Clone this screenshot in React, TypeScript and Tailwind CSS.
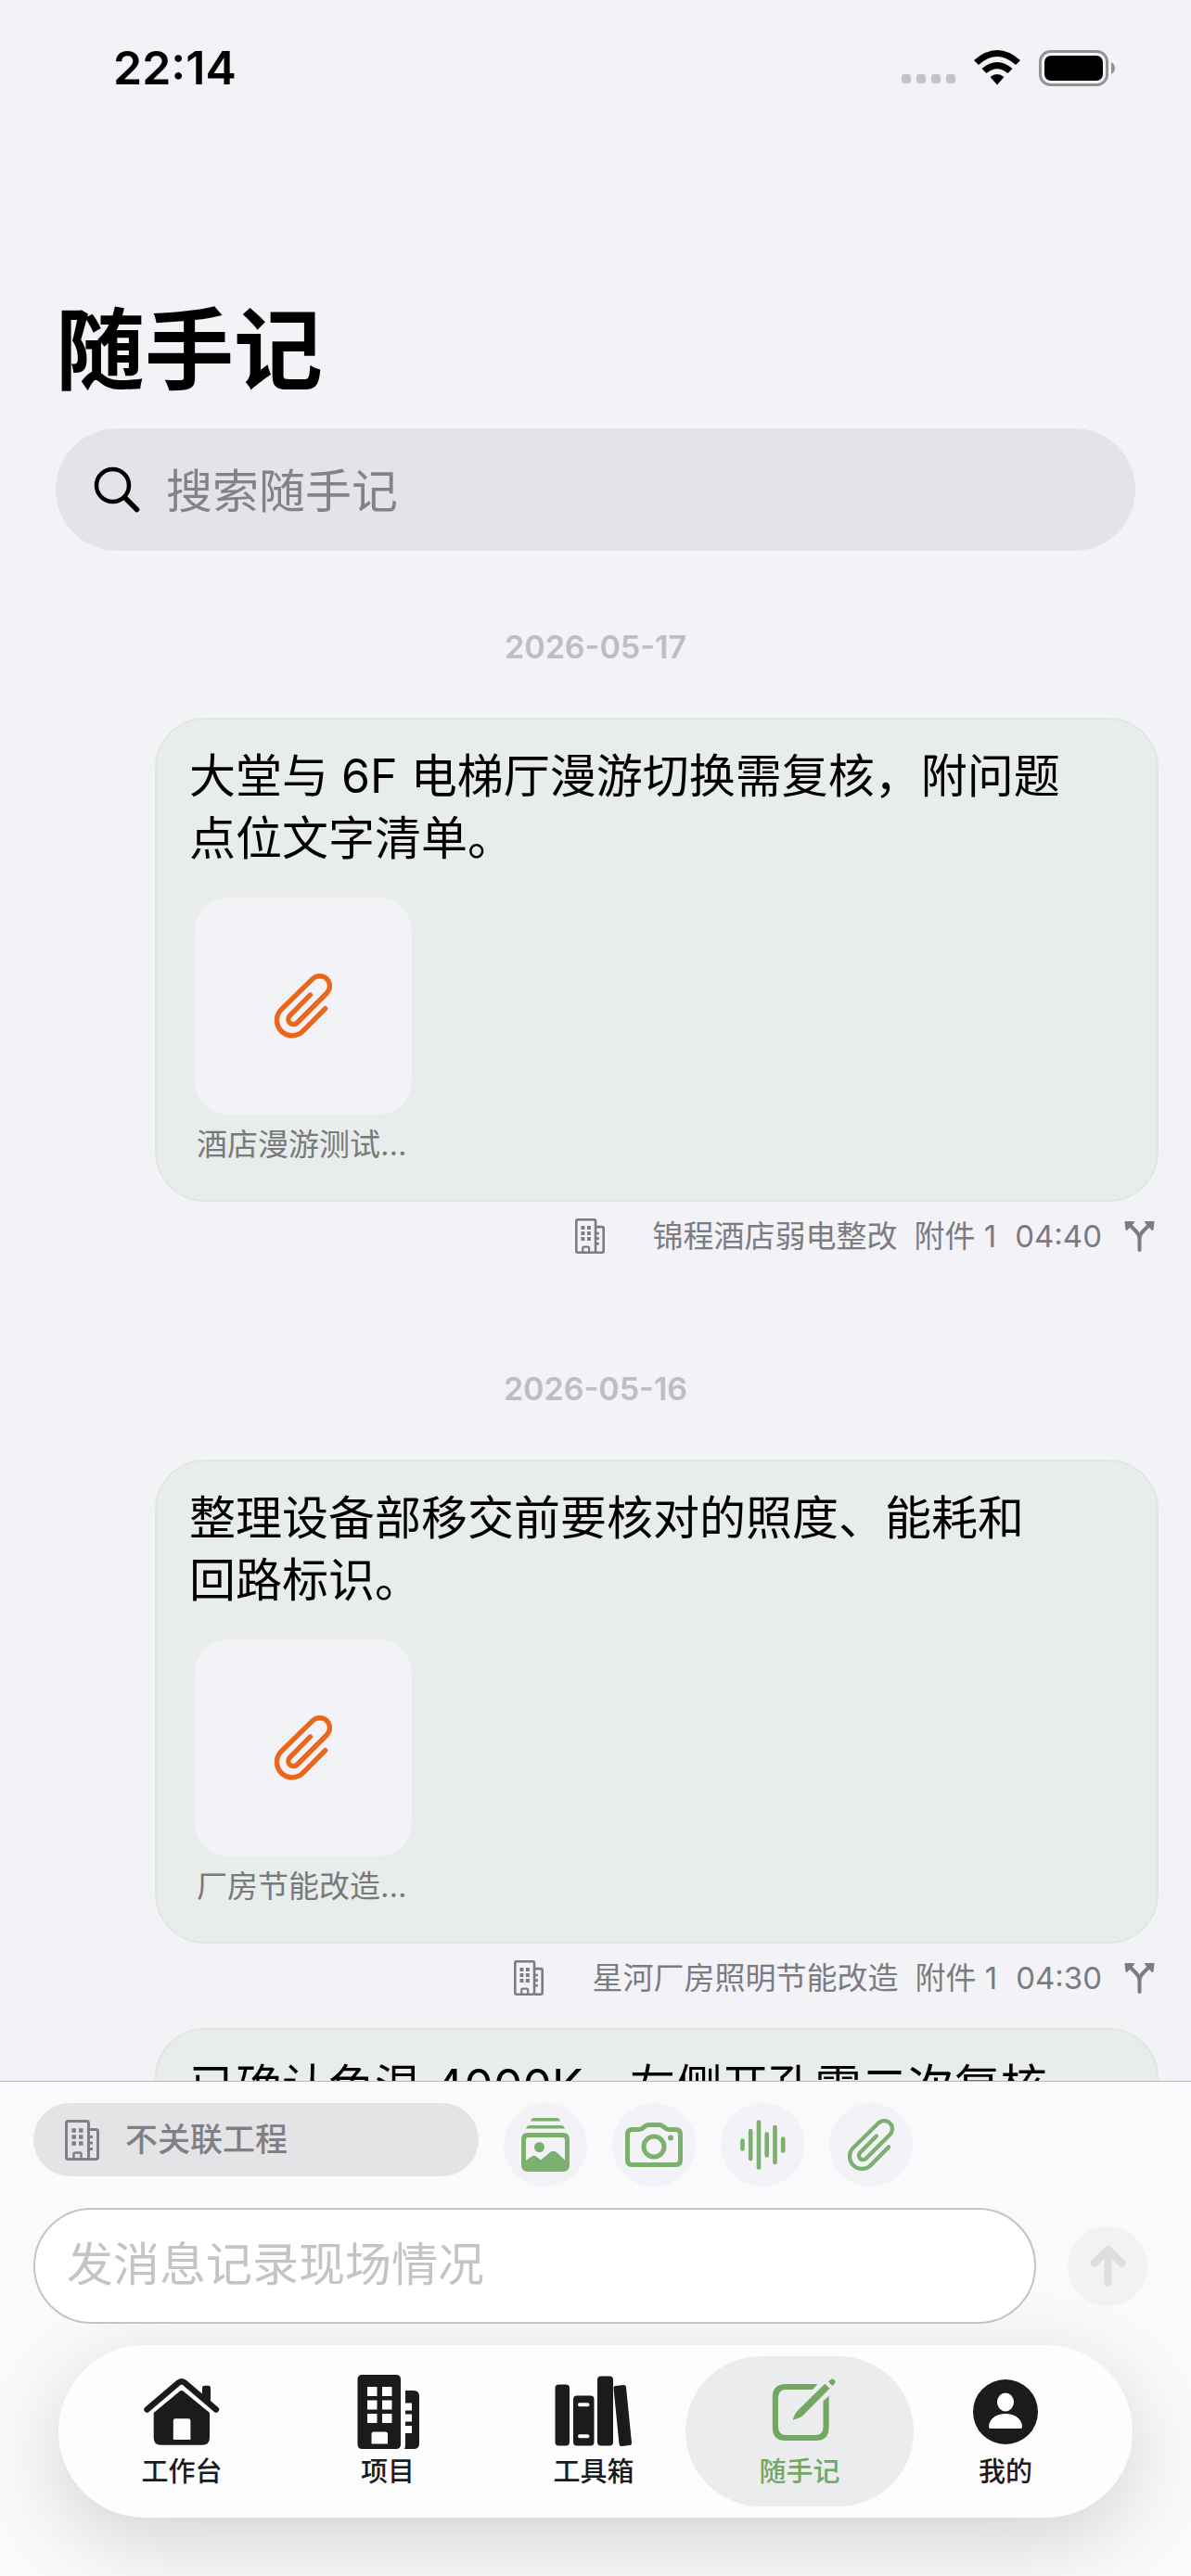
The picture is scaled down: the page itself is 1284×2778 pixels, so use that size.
import { useState } from 'react';
import clsx from 'clsx';

type IconProps = { className?: string };

type Note = {
  text: string;
  file?: string;
  project?: string;
  time?: string;
};

const noteGroups: { date: string; notes: Note[] }[] = [
  {
    date: '2026-05-17',
    notes: [
      {
        text: '大堂与 6F 电梯厅漫游切换需复核，附问题点位文字清单。',
        file: '酒店漫游测试记录',
        project: '锦程酒店弱电整改',
        time: '04:40',
      },
    ],
  },
  {
    date: '2026-05-16',
    notes: [
      {
        text: '整理设备部移交前要核对的照度、能耗和回路标识。',
        file: '厂房节能改造清单',
        project: '星河厂房照明节能改造',
        time: '04:30',
      },
      {
        text: '已确认色温 4000K，左侧开孔需二次复核',
      },
    ],
  },
];

const PaperclipIcon = ({ className }: IconProps) => (
  <svg viewBox="288 302 186 208" fill="none" stroke="currentColor" strokeWidth="16" strokeLinecap="round" className={className}>
    <path d="M452 415 380 488A49 49 0 0 1 310 418L411 319A32 32 0 0 1 457 365L361 461A16 16 0 0 1 337 438L403 371" />
  </svg>
);

const BuildingIcon = ({ className }: IconProps) => (
  <svg viewBox="0 0 37 44" fill="none" stroke="currentColor" strokeWidth="3" strokeLinejoin="round" className={className}>
    <rect x="1.5" y="1.5" width="24" height="41" rx="2" />
    <path d="M25.5 10.5H33.5Q35.5 10.5 35.5 12.5V40.5Q35.5 42.5 33.5 42.5H25.5" />
    <path d="M9.5 42V37Q9.5 35.5 11 35.5H16Q17.5 35.5 17.5 37V42" strokeWidth="2.5" />
    <path d="M7.5 11.5H12M15 11.5H19.5M7.5 18.5H12M15 18.5H19.5M7.5 25.5H12M15 25.5H19.5" strokeWidth="4.5" />
    <path d="M26 18.5H30M26 25H30M26 31.5H30" strokeWidth="3" />
  </svg>
);

const ForkIcon = ({ className }: IconProps) => (
  <svg viewBox="0 0 33 34" fill="none" stroke="currentColor" strokeWidth="4" strokeLinecap="round" className={className}>
    <path d="M16.5 32V20C16.5 16.5 15 14 12 11L6 5M16.5 20C16.5 16.5 18 14 21 11L27 5" />
    <path d="M1.5 2H10L2.5 10ZM31.5 2H23L30.5 10Z" fill="currentColor" strokeWidth="2" strokeLinejoin="round" />
  </svg>
);

const SearchIcon = ({ className }: IconProps) => (
  <svg viewBox="0 0 50 50" fill="none" stroke="currentColor" strokeWidth="4.5" strokeLinecap="round" className={className}>
    <circle cx="20.5" cy="20.5" r="17.5" />
    <path d="M33.5 33.5 46.5 46.5" strokeWidth="5.5" />
  </svg>
);

const AlbumIcon = ({ className }: IconProps) => (
  <svg viewBox="0 0 54 60" fill="currentColor" className={className}>
    <path d="M11 4.5Q12 1 15 1H39Q42 1 43 4.5ZM6 12.5Q7 9 10 9H44Q47 9 48 12.5Z" />
    <path fillRule="evenodd" d="M8 17H46Q53 17 53 24V51Q53 59 46 59H8Q1 59 1 51V24Q1 17 8 17ZM9 22Q6 22 6 25V47L12 42.5Q14.5 41 17 42.5L22 46.5L32 38Q35.5 35.5 39 38L48 46.5V25Q48 22 45 22Z" />
    <circle cx="20.5" cy="32.5" r="5.5" />
  </svg>
);

const CameraIcon = ({ className }: IconProps) => (
  <svg viewBox="0 0 62 50" fill="none" stroke="currentColor" strokeWidth="5" className={className}>
    <path d="M7.5 8.5H15C20 8.5 20.5 3.5 25 3.5H37C41.5 3.5 42 8.5 47 8.5H54.5Q59.5 8.5 59.5 13.5V41.5Q59.5 46.5 54.5 46.5H7.5Q2.5 46.5 2.5 41.5V13.5Q2.5 8.5 7.5 8.5Z" />
    <circle cx="31" cy="27" r="11" />
    <circle cx="49" cy="17.5" r="3" fill="currentColor" stroke="none" />
  </svg>
);

const VoiceIcon = ({ className }: IconProps) => (
  <svg viewBox="0 0 50 56" fill="none" stroke="currentColor" strokeWidth="4.6" strokeLinecap="round" className={className}>
    <path d="M3.5 23.5V32.5M12.2 13V43M21 3.5V52.5M29.7 16.5V39.5M38.5 9V47M47.2 21.5V34.5" />
  </svg>
);

const SendIcon = ({ className }: IconProps) => (
  <svg viewBox="0 0 40 46" fill="none" stroke="currentColor" strokeWidth="8.5" strokeLinecap="round" strokeLinejoin="round" className={className}>
    <path d="M20 41.5V5M5 20 20 5 35 20" />
  </svg>
);

const HomeIcon = ({ className }: IconProps) => (
  <svg viewBox="0 0 84 80" fill="currentColor" className={className}>
    <path d="M4.5 37.5 38.5 8.5Q41.8 6 45 8.5L79 37.5" fill="none" stroke="currentColor" strokeWidth="6.4" strokeLinecap="round" />
    <path d="M64 24V14Q64 11.7 66.5 11.7H70.5Q73 11.7 73 14V32Z" />
    <path fillRule="evenodd" d="M11.7 41 39.5 18Q41.8 16 44 18L72 41V68Q72 75.7 64 75.7H19.5Q11.7 75.7 11.7 68ZM32.8 49.5V70H51.4V49.5Q51.4 47.3 49 47.3H35Q32.8 47.3 32.8 49.5Z" />
  </svg>
);

const ProjectIcon = ({ className }: IconProps) => (
  <svg viewBox="0 0 84 80" fill="currentColor" className={className}>
    <path fillRule="evenodd" d="M14.5 0H51Q56 0 56 5V75Q56 80 51 80H14.5Q9.5 80 9.5 75V5Q9.5 0 14.5 0ZM20 13V23H30.5V13ZM36 13V23H46.5V13ZM20 27.5V37.5H30.5V27.5ZM36 27.5V37.5H46.5V27.5ZM20 42V52H30.5V42ZM36 42V52H46.5V42ZM27 61.5Q24.5 61.5 24.5 64V74.5H42V64Q42 61.5 39.5 61.5Z" />
    <path d="M61 17H70Q76 17 76 23V74Q76 80 70 80H60Q61 78 61 75V63H68V55H61V50.5H68V42.5H61V38.5H68V30.5H61Z" />
  </svg>
);

const ToolboxIcon = ({ className }: IconProps) => (
  <svg viewBox="0 0 84 80" fill="currentColor" className={className}>
    <rect x="0.5" y="10.5" width="15.5" height="66" rx="4" />
    <path fillRule="evenodd" d="M24 22.5H38.5Q42.5 22.5 42.5 26.5V72.5Q42.5 76.5 38.5 76.5H24Q20 76.5 20 72.5V26.5Q20 22.5 24 22.5ZM27 30.3A2 2 0 0 0 27 34.3H35.5A2 2 0 0 0 35.5 30.3ZM27 64.3A2 2 0 0 0 27 68.3H35.5A2 2 0 0 0 35.5 64.3Z" />
    <rect x="46" y="1.5" width="17" height="75" rx="4" />
    <path d="M66 14.5 74.5 13.5 80.5 73.5 72 74.5Z" stroke="currentColor" strokeWidth="5" strokeLinejoin="round" />
  </svg>
);

const ComposeIcon = ({ className }: IconProps) => (
  <svg viewBox="0 0 84 80" fill="currentColor" className={className}>
    <path d="M61.7 10H27Q12.8 10 12.8 24V57Q12.8 71 27 71H59.5Q73.6 71 73.6 57V22.7L67.5 28.5V56Q67.5 65 59 65H27.5Q19 65 19 56V25Q19 16 27.5 16H56Z" />
    <path d="M69.3 9.7 74.5 14.7 44.5 45Q40 47.5 35.5 48.5Q34.5 48.5 35 47.5Q36.5 43 39 39.5Z" />
    <path d="M73 7.5 76 4.8A3.3 3.3 0 0 1 80.3 9L77.5 12Z" />
  </svg>
);

const ProfileIcon = ({ className }: IconProps) => (
  <svg viewBox="-2 0 84 80" className={className}>
    <circle cx="40" cy="40" r="35" fill="currentColor" />
    <ellipse cx="40" cy="29.5" rx="9" ry="10" fill="white" />
    <path d="M24 58Q22 58 22 56C22 48 30 42 40 42S58 48 58 56Q58 58 56 58Z" fill="white" />
  </svg>
);

const tabs = [
  { label: '工作台', Icon: HomeIcon },
  { label: '项目', Icon: ProjectIcon },
  { label: '工具箱', Icon: ToolboxIcon },
  { label: '随手记', Icon: ComposeIcon },
  { label: '我的', Icon: ProfileIcon },
];

const actions = [
  { label: '相册', Icon: AlbumIcon, size: 'w-[54px]' },
  { label: '拍照', Icon: CameraIcon, size: 'w-[62px]' },
  { label: '语音', Icon: VoiceIcon, size: 'w-[50px]' },
  { label: '附件', Icon: PaperclipIcon, size: 'w-[50px]' },
];

const StatusBar = () => (
  <div className="flex items-center justify-between pt-[43px] pr-[82px] pl-[122px]">
    <span className="text-[50px] leading-[60px] font-semibold">22:14</span>
    <div className="flex items-center">
      <svg viewBox="0 0 58 40" className="h-10 w-[58px]" fill="#c4c3c9">
        <rect x="0" y="27" width="10" height="10" rx="3" />
        <rect x="16" y="27" width="10" height="10" rx="3" />
        <rect x="32" y="27" width="10" height="10" rx="3" />
        <rect x="48" y="27" width="10" height="10" rx="3" />
      </svg>
      <svg viewBox="0 0 50 38" className="ml-5 h-[38px] w-[50px]">
        <path d="M0 11Q25-11 50 11L45 16Q25-2 5 16Z" />
        <path d="M8.5 20Q25 6 41.5 20L36.5 25Q25 15.5 13.5 25Z" />
        <path d="M17.5 29Q25 23 32.5 29L25 37.5Z" />
      </svg>
      <svg viewBox="0 0 82 39" className="ml-5 h-[39px] w-[82px]">
        <rect x="1.5" y="1.5" width="72" height="36" rx="11" fill="none" stroke="#929196" strokeWidth="3" />
        <rect x="6" y="6" width="63" height="27" rx="7" />
        <path d="M78 13Q82 15.5 82 19.5T78 26Z" fill="#929196" />
      </svg>
    </div>
  </div>
);

const NoteCard = ({ note }: { note: Note }) => (
  <article className="pb-7">
    <div className="rounded-[54px] border-2 border-[#dde8df] bg-[#e8eceb] px-[35px] pt-7 pb-9">
      <p className="pr-15 text-[50px] leading-[67px]">{note.text}</p>
      {note.file && (
        <a href="#attachment" className="mt-[30px] ml-[6px] block w-[234px]">
          <span className="flex h-[234px] items-center justify-center rounded-[36px] bg-[#f2f2f7] text-[#e8671b]">
            <PaperclipIcon className="w-[62px]" />
          </span>
          <span className="mt-2 block truncate px-[2px] text-[33px] leading-[48px] text-[#77797a]">
            {note.file}
          </span>
        </a>
      )}
    </div>
    {note.project && (
      <div className="mt-[11px] flex h-[52px] items-center justify-end pr-1 text-[33px] leading-[48px] text-[#7c7b80]">
        <BuildingIcon className="mr-[52px] w-8" />
        <span>{note.project}</span>
        <span className="ml-[18px]">附件 1</span>
        <span className="ml-5">{note.time}</span>
        <button type="button" aria-label="流转" className="ml-6">
          <ForkIcon className="w-[33px]" />
        </button>
      </div>
    )}
  </article>
);

const App = () => {
  const [activeTab, setActiveTab] = useState('随手记');
  const [draft, setDraft] = useState('');

  return (
    <div className="flex h-screen flex-col overflow-hidden bg-[#f2f2f7] font-[Inter,'Noto_Sans_CJK_SC',sans-serif] text-black">
      <StatusBar />

      <header className="px-[60px] pt-[204px]">
        <h1 className="text-[96px] leading-[140px] font-bold">随手记</h1>
        <label className="mt-[15px] flex h-[132px] items-center gap-7 rounded-full bg-[#e3e3e8] px-[41px]">
          <SearchIcon className="w-[50px]" />
          <input
            type="search"
            aria-label="搜索随手记"
            placeholder="搜索随手记"
            className="min-w-0 flex-1 bg-transparent pt-1 text-[50px] outline-none placeholder:text-[#838288]"
          />
        </label>
      </header>

      <main className="min-h-0 flex-1 overflow-hidden pr-[35px] pl-[167px]">
        {noteGroups.map((group) => (
          <section key={group.date} className="pb-[7px]">
            <h2 className="-ml-[132px] pt-20 pb-[52px] text-center text-[34px] leading-12 font-semibold text-[#bdbdc2]">
              {group.date}
            </h2>
            {group.notes.map((note) => (
              <NoteCard key={note.text} note={note} />
            ))}
          </section>
        ))}
      </main>

      <footer className="border-t border-[#bcbcc0] bg-[#fafafc] px-9 pt-[23px] pb-[63px]">
        <div className="flex items-start">
          <button
            type="button"
            className="mr-[27px] flex h-[79px] w-[480px] items-center gap-7 rounded-full bg-[#e4e4e7] pl-[34px] text-[35px] font-medium text-[#807f86]"
          >
            <BuildingIcon className="w-[37px]" />
            不关联工程
          </button>
          <div className="flex gap-[27px]">
            {actions.map(({ label, Icon, size }) => (
              <button
                key={label}
                type="button"
                aria-label={label}
                className="flex size-[90px] items-center justify-center rounded-full bg-[#f2f2f7] text-[#7bb06e]"
              >
                <Icon className={size} />
              </button>
            ))}
          </div>
        </div>

        <div className="mt-[23px] flex items-center gap-[34px] pr-[11px]">
          <input
            type="text"
            aria-label="发消息记录现场情况"
            placeholder="发消息记录现场情况"
            value={draft}
            onChange={(e) => setDraft(e.target.value)}
            className="h-[125px] min-w-0 flex-1 rounded-full border-2 border-[#c4c4c7] bg-white px-[34px] pb-1 text-[50px] outline-none placeholder:text-[#c4c4c6]"
          />
          <button
            type="button"
            aria-label="发送"
            className="flex size-[86px] items-center justify-center rounded-full bg-[#f2f2f4] text-[#dedee0]"
          >
            <SendIcon className="w-[39px]" />
          </button>
        </div>

        <nav className="mx-[27px] mt-[23px] flex h-[186px] items-center rounded-full bg-[#fdfdfe] pr-[26px] pl-[22px] shadow-[0_24px_90px_rgba(0,0,0,0.16)]">
          {tabs.map(({ label, Icon }) => (
            <button
              key={label}
              type="button"
              onClick={() => setActiveTab(label)}
              className={clsx(
                '-mx-3 flex h-[162px] flex-1 flex-col items-center rounded-full pt-5 text-[29px] leading-10 font-medium',
                activeTab === label ? 'bg-[#ebecee] text-[#72a862]' : 'text-[#1a1b1d]'
              )}
            >
              <Icon className="mb-[5px] h-20 w-[84px]" />
              {label}
            </button>
          ))}
        </nav>
      </footer>
    </div>
  );
};

export default App;
